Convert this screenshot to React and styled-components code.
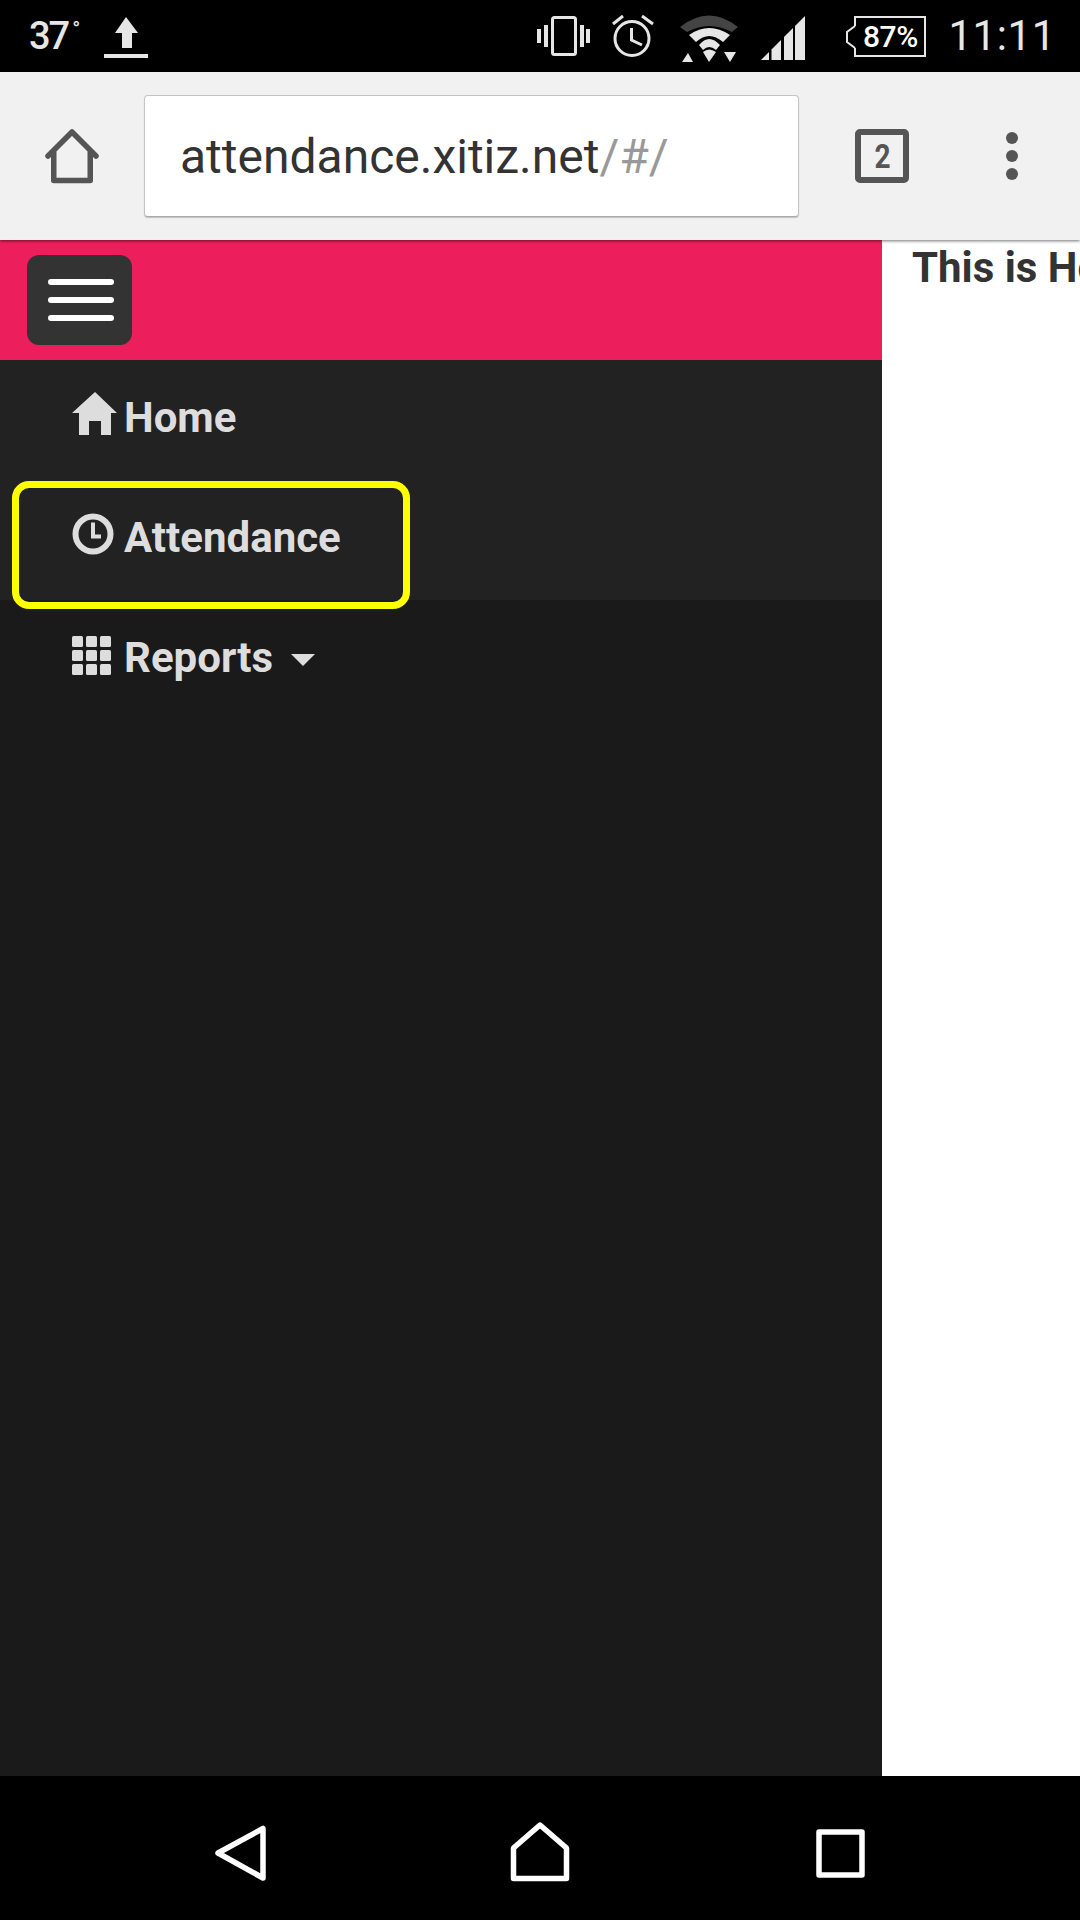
import styled, { createGlobalStyle } from 'styled-components';

const GlobalStyle = createGlobalStyle`
  html, body {
    margin: 0;
    padding: 0;
    background: #000;
  }
  * {
    box-sizing: border-box;
  }
`;

const Phone = styled.div`
  display: flex;
  flex-direction: column;
  width: 1080px;
  height: 1920px;
  overflow: hidden;
  font-family: Roboto, 'Liberation Sans', sans-serif;
`;

const StatusBar = styled.div`
  display: flex;
  justify-content: space-between;
  align-items: center;
  flex: 0 0 72px;
  padding: 0 24px 0 29px;
  background: #000;
  color: #e6e6e6;
`;

const StatusGroup = styled.div`
  display: flex;
  align-items: center;
  gap: ${(p) => p.$gap}px;
`;

const Temperature = styled.span`
  font-size: 38px;
  font-weight: 500;
  letter-spacing: -2px;
  line-height: 72px;

  sup {
    font-size: 21px;
    font-weight: 500;
    letter-spacing: 0;
    line-height: 0;
    vertical-align: 13px;
    margin-left: 4px;
  }
`;

const StatusIcon = styled.svg`
  display: block;
  height: 72px;
  fill: #e6e6e6;
`;

const Battery = styled.div`
  position: relative;
  display: flex;
  justify-content: center;
  align-items: center;
  width: 72px;
  height: 41px;
  margin-left: 27px;
  border: 2px solid #e6e6e6;
  color: #fff;
  font-size: 30px;
  font-weight: 500;
  letter-spacing: -0.5px;
`;

const BatteryNub = styled.svg`
  position: absolute;
  left: -10px;
  top: 7px;
  width: 10px;
  height: 24px;
`;

const Clock = styled.span`
  font-size: 42px;
  letter-spacing: 0.6px;
  line-height: 72px;
`;

const Toolbar = styled.div`
  position: relative;
  z-index: 1;
  display: flex;
  align-items: center;
  flex: 0 0 168px;
  padding-left: 44px;
  background: #f1f1f1;
  box-shadow: 0 1px 3px rgba(0, 0, 0, 0.55);
`;

const ToolIcon = styled.svg`
  display: block;
  flex: none;
  width: 55px;
  height: 56px;
`;

const UrlBox = styled.div`
  display: flex;
  align-items: center;
  width: 655px;
  height: 122px;
  margin: 0 56px 0 45px;
  padding-left: 35px;
  background: #fff;
  border-radius: 4px;
  border: 1px solid #c4c4c4;
  border-bottom: 1px solid #aaa;
  box-shadow: 0 1px 1px rgba(0, 0, 0, 0.2);
  font-size: 48px;
  color: #333;
`;

const UrlPath = styled.span`
  color: #999;
`;

const TabCount = styled.div`
  display: flex;
  justify-content: center;
  align-items: center;
  flex: none;
  width: 54px;
  height: 54px;
  border: 6px solid #555;
  border-radius: 5px;
  color: #555;
  font-size: 33px;
  font-weight: 700;
`;

const TabDigit = styled.span`
  display: block;
  transform: scaleX(0.85);
`;

const MenuDots = styled.div`
  display: flex;
  flex-direction: column;
  gap: 6px;
  margin-left: 97px;
`;

const MenuDot = styled.span`
  display: block;
  width: 12px;
  height: 12px;
  border-radius: 50%;
  background: #555;
`;

const Body = styled.div`
  display: flex;
  flex: 1;
  min-height: 0;
  background: #fff;
`;

const Sidebar = styled.div`
  position: relative;
  flex: 0 0 882px;
  background: #1a1a1a;
`;

const Header = styled.div`
  display: flex;
  align-items: center;
  height: 120px;
  padding-left: 27px;
  background: #ec1e5b;
`;

const MenuButton = styled.div`
  display: flex;
  flex-direction: column;
  justify-content: center;
  gap: 12px;
  width: 105px;
  height: 90px;
  padding-left: 21px;
  background: #333;
  border-radius: 12px;
`;

const MenuBar = styled.span`
  display: block;
  width: 66px;
  height: 6px;
  border-radius: 3px;
  background: #fff;
`;

const NavRow = styled.div`
  display: flex;
  align-items: flex-start;
  height: 120px;
  padding: 28px 0 0 72px;
  background: ${(p) => (p.$lit ? '#222' : 'transparent')};
  color: #ddd;
  font-size: 42px;
  font-weight: 700;
  line-height: 60px;
`;

const NavIcon = styled.svg`
  display: block;
  flex: none;
  width: 52px;
  height: 60px;
  fill: #ddd;
`;

const Caret = styled.span`
  width: 0;
  height: 0;
  margin: 26px 0 0 18px;
  border-top: 12px solid #ddd;
  border-left: 12px solid transparent;
  border-right: 12px solid transparent;
`;

const Highlight = styled.div`
  position: absolute;
  left: 12px;
  top: 241px;
  width: 398px;
  height: 128px;
  border: 7px solid #ff0;
  border-radius: 17px;
`;

const Content = styled.div`
  flex: 1;
  min-width: 0;
  overflow: hidden;
  padding-left: 30px;
  color: #333;
  font-size: 42px;
  font-weight: 700;
  line-height: 56px;
  white-space: nowrap;
`;

const NavBar = styled.div`
  display: flex;
  flex: 0 0 144px;
  gap: 244px;
  padding: 46px 0 0 214px;
  background: #000;
`;

const NavButton = styled.svg`
  display: block;
  height: 60px;
  fill: none;
  stroke: #fff;
  stroke-width: 5.5px;
  stroke-linejoin: round;
`;

function App() {
  return (
    <Phone>
      <GlobalStyle />
      <StatusBar>
        <StatusGroup $gap={24}>
          <Temperature>
            37<sup>°</sup>
          </Temperature>
          <StatusIcon viewBox="104 0 44 72" width="44">
            <polygon points="126,17 138,33 132,33 132,48 122,48 122,33 115,33" />
            <rect x="104" y="54" width="44" height="4" />
          </StatusIcon>
        </StatusGroup>
        <StatusGroup $gap={22}>
          <StatusIcon viewBox="537 0 54 72" width="54">
            <rect x="538" y="29" width="4" height="14" />
            <rect x="545" y="25" width="4" height="22" />
            <rect x="553.500" y="17.500" width="23" height="37" rx="2" fill="none" stroke="#e6e6e6" strokeWidth="3" />
            <rect x="581" y="25" width="4" height="22" />
            <rect x="587" y="29" width="4" height="14" />
          </StatusIcon>
          <StatusIcon viewBox="613 0 42 72" width="42">
            <circle cx="633" cy="38.500" r="17" fill="none" stroke="#e6e6e6" strokeWidth="3" />
            <path d="M632.500 28V40L643 45M614 24L624 16M643 16L654 24" fill="none" stroke="#e6e6e6" strokeWidth="3" />
          </StatusIcon>
          <StatusIcon viewBox="677 0 63 72" width="63">
            <path d="M681 27Q710 4 739 27L733 32Q710 20 688 32Z" fill="#444" />
            <path d="M690 35Q710 21 731 35L724 42Q710 30 697 42Z" />
            <path d="M700 45Q710 33 721 45L717 50Q710 44 704 50Z" />
            <path d="M704 52Q710 47 717 52L710 62Z" />
            <polygon points="683,62 694,62 689,53" />
            <polygon points="725,52 737,52 731,62" />
          </StatusIcon>
          <StatusIcon viewBox="762 0 44 72" width="44">
            <polygon points="762,60 770,52 770,60" />
            <polygon points="772.500,49.500 782,40 782,60 772.500,60" />
            <polygon points="785,37 794,28 794,60 785,60" />
            <polygon points="796,26 806,16 806,60 796,60" />
          </StatusIcon>
          <Battery>
            <BatteryNub viewBox="0 0 10 24">
              <rect x="8" y="1" width="2" height="22" fill="#000" />
              <path d="M9 1L1 7V17L9 23" fill="#000" stroke="#e6e6e6" strokeWidth="2" />
            </BatteryNub>
            87%
          </Battery>
          <Clock>11:11</Clock>
        </StatusGroup>
      </StatusBar>

      <Toolbar>
        <ToolIcon viewBox="44 128 55 56" fill="none" stroke="#555" strokeWidth="5.500" strokeLinecap="round" strokeLinejoin="round">
          <path d="M48 156L72 132L96 156M53.750 152V180.500H90.250V152" />
        </ToolIcon>
        <UrlBox>
          attendance.xitiz.net<UrlPath>/#/</UrlPath>
        </UrlBox>
        <TabCount>
          <TabDigit>2</TabDigit>
        </TabCount>
        <MenuDots>
          <MenuDot />
          <MenuDot />
          <MenuDot />
        </MenuDots>
      </Toolbar>

      <Body>
        <Sidebar>
          <Header>
            <MenuButton>
              <MenuBar />
              <MenuBar />
              <MenuBar />
            </MenuButton>
          </Header>
          <NavRow $lit>
            <NavIcon viewBox="0 0 52 60">
              <path d="M23 4L45 25H39V47H29V33H17V47H7V25H0Z" />
            </NavIcon>
            Home
          </NavRow>
          <NavRow $lit>
            <NavIcon viewBox="0 0 52 60">
              <circle cx="21" cy="26" r="17.500" fill="none" stroke="#ddd" strokeWidth="6" />
              <path d="M21 14.500V28.500H29" fill="none" stroke="#ddd" strokeWidth="4" />
            </NavIcon>
            Attendance
          </NavRow>
          <NavRow>
            <NavIcon viewBox="0 0 52 60">
              {[8, 22, 36].map((y) =>
                [0, 14, 28].map((x) => <rect key={`${x}-${y}`} x={x} y={y} width="11" height="11" rx="1.500" />)
              )}
            </NavIcon>
            Reports
            <Caret />
          </NavRow>
          <Highlight />
        </Sidebar>
        <Content>This is Home</Content>
      </Body>

      <NavBar>
        <NavButton viewBox="214 1822 52 60" width="52">
          <path d="M218 1853L263 1828.500V1878Z" />
        </NavButton>
        <NavButton viewBox="510 1822 62 60" width="62">
          <path d="M540 1825L566.500 1848V1878.500H513.500V1848Z" />
        </NavButton>
        <NavButton viewBox="816 1822 50 60" width="50">
          <rect x="819" y="1832" width="43" height="43" />
        </NavButton>
      </NavBar>
    </Phone>
  );
}

export default App;
